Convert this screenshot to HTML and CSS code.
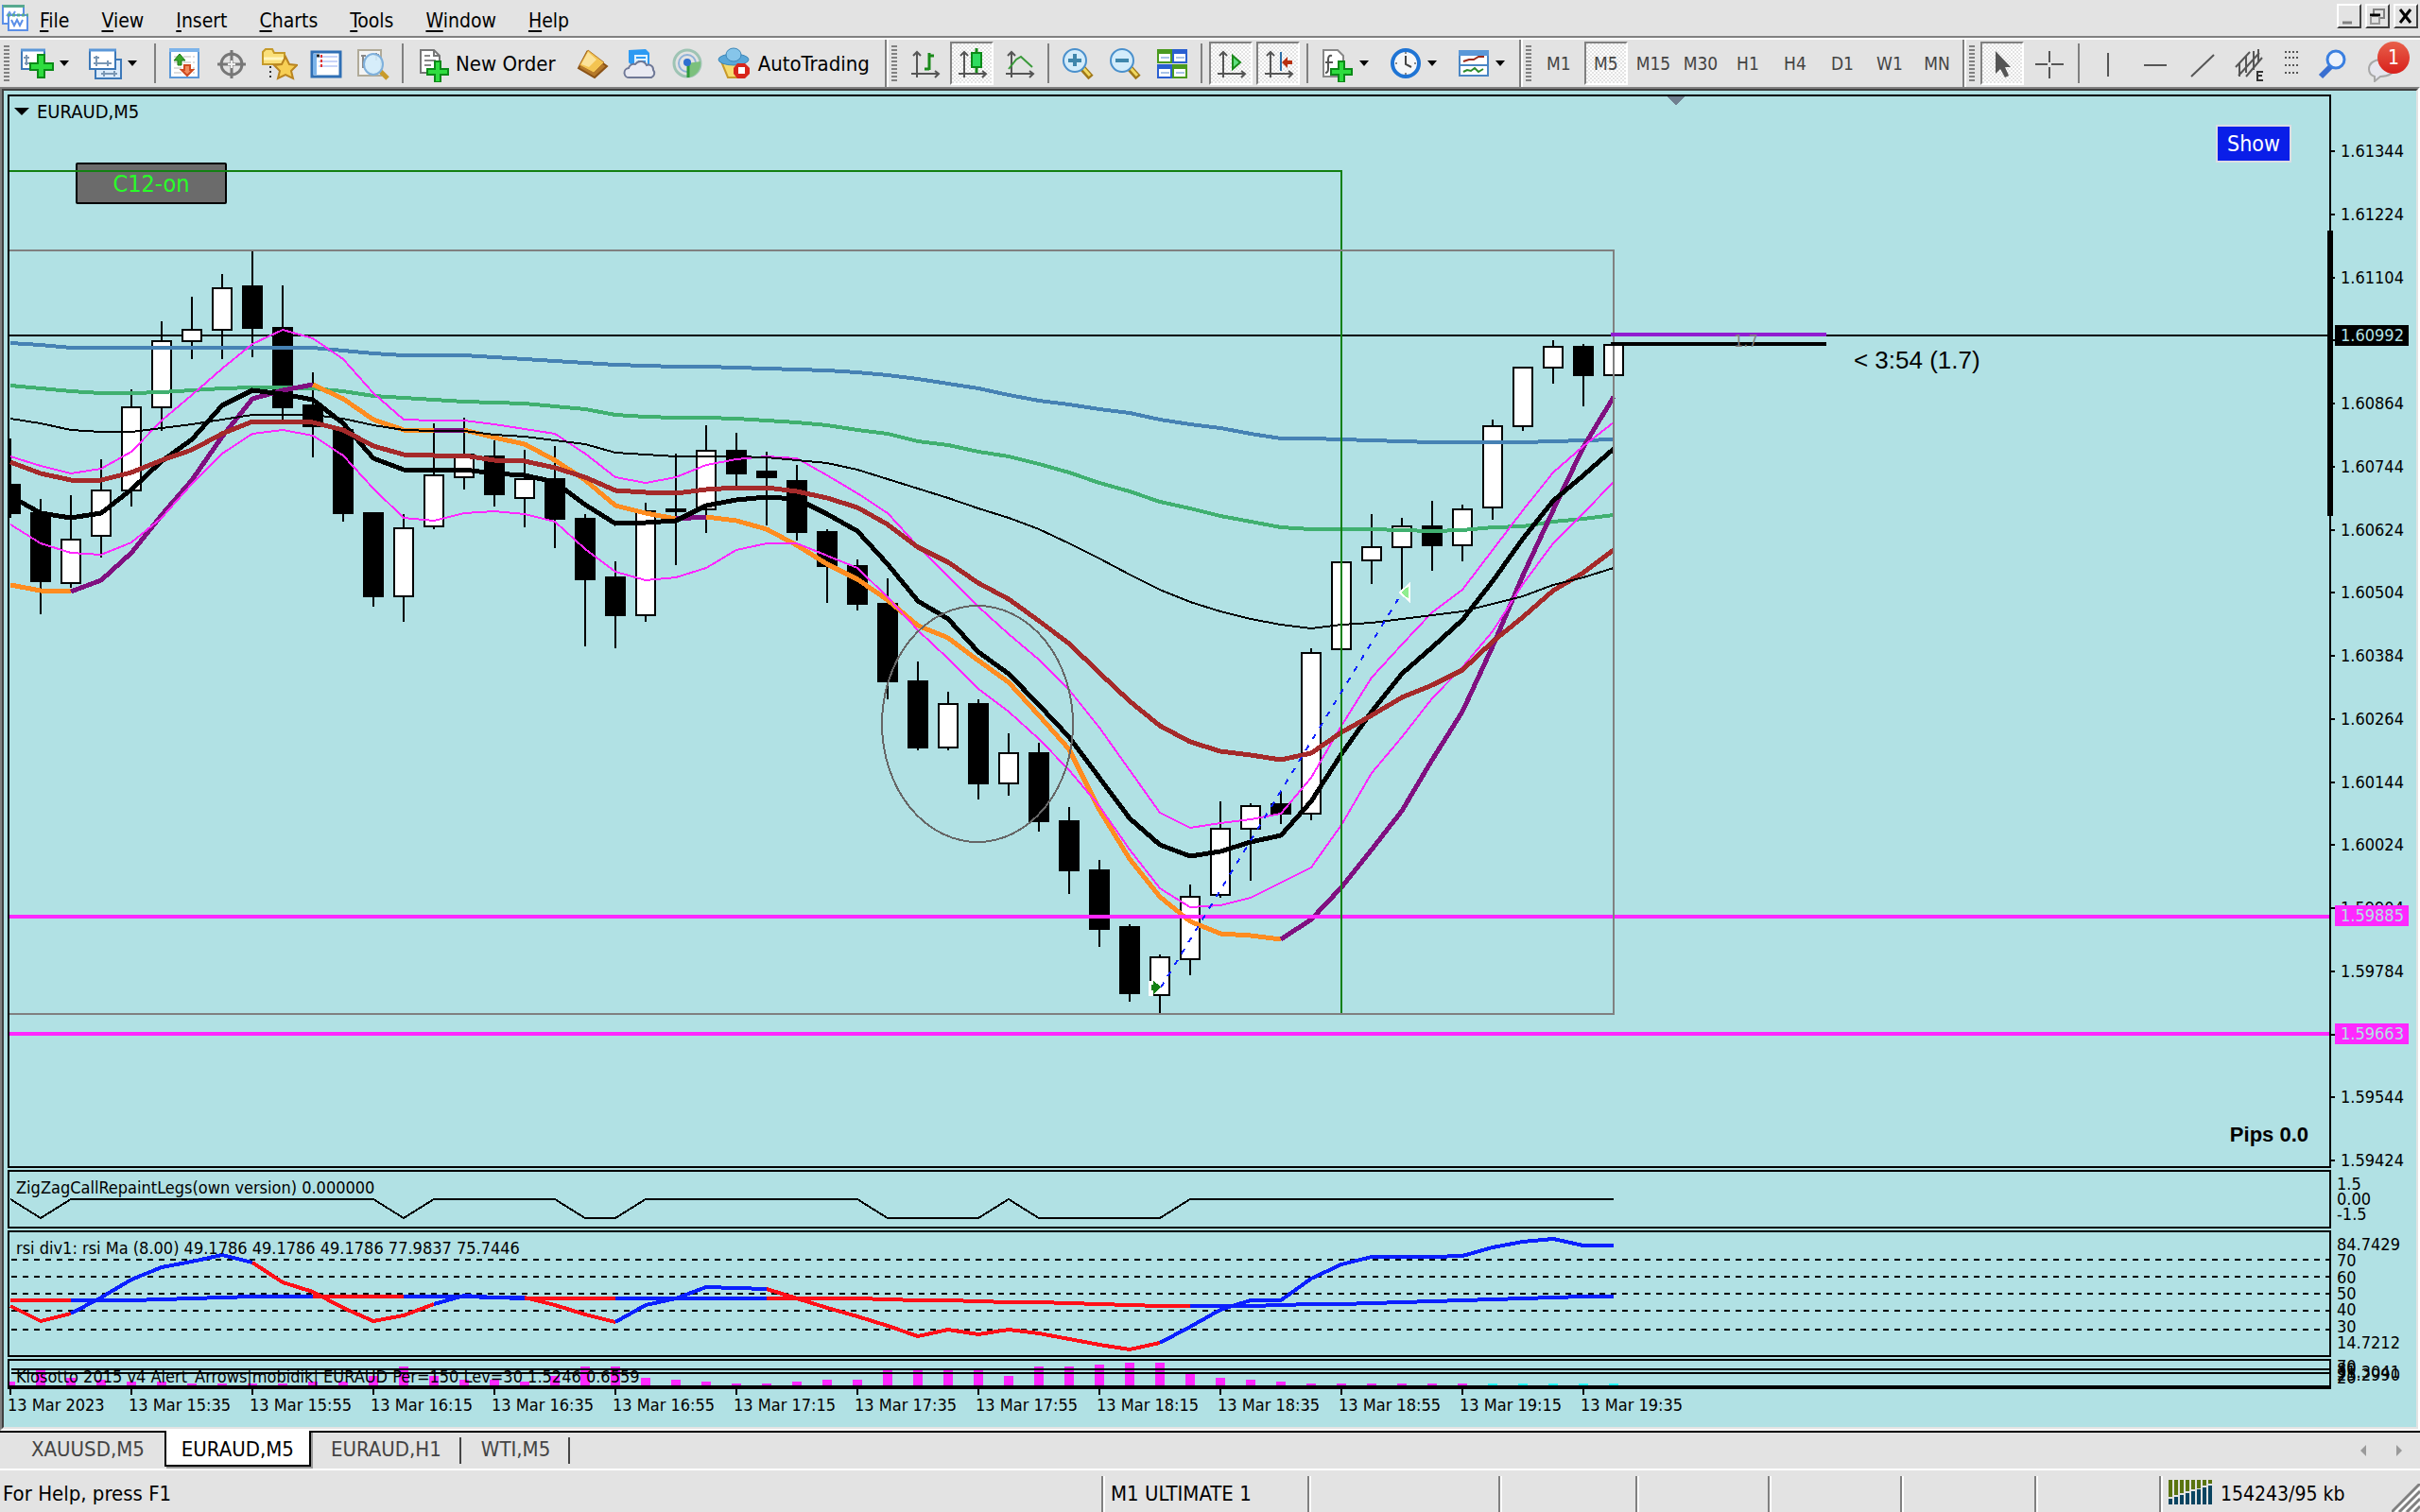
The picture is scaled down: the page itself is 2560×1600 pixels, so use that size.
FILE: index.html
```html
<!DOCTYPE html>
<html lang="en">
<head>
    <meta charset="UTF-8">
    <meta name="viewport" content="width=device-width, initial-scale=1.0">
    <title>EURAUD,M5</title>
    <link rel="stylesheet" href="styles.css">
</head>
<body>

<header class="menubar">
    <svg class="app-icon" viewBox="0 0 28 28">
        <rect x="1" y="1" width="22" height="19" fill="#fff" stroke="#5b8fe8" stroke-width="2"/>
        <rect x="1" y="0" width="23" height="3" fill="#57a98f"/>
        <path d="M5 12l3-4 3 4 3-5" fill="none" stroke="#6d9bf0" stroke-width="2"/>
        <rect x="7" y="11" width="20" height="16" fill="#fff" stroke="#5b8fe8" stroke-width="2"/>
        <path d="M6 11h22" stroke="#57a98f" stroke-width="3" stroke-dasharray="3 2"/>
        <path d="M10 16l3 6 3-6 3 6 3-6" fill="none" stroke="#5b8fe8" stroke-width="2"/>
    </svg>
    <nav class="menu">
        <a href="#"><u>F</u>ile</a>
        <a href="#"><u>V</u>iew</a>
        <a href="#"><u>I</u>nsert</a>
        <a href="#"><u>C</u>harts</a>
        <a href="#"><u>T</u>ools</a>
        <a href="#"><u>W</u>indow</a>
        <a href="#"><u>H</u>elp</a>
    </nav>
    <div class="window-buttons">
        <button aria-label="Minimize"><svg viewBox="0 0 22 22"><path d="M4 18h10" stroke="#808080" stroke-width="3"/></svg></button>
        <button aria-label="Restore"><svg viewBox="0 0 22 22"><path d="M7 9V4h11v9h-4" fill="none" stroke="#808080" stroke-width="2"/><path d="M3 10h11" stroke="#000" stroke-width="3"/><path d="M4 11v8h9v-8" fill="none" stroke="#999" stroke-width="2"/></svg></button>
        <button aria-label="Close"><svg viewBox="0 0 22 22"><path d="M5 4l11 14M16 4L5 18" stroke="#000" stroke-width="3"/></svg></button>
    </div>
</header>

<div class="toolbar">
    <span class="grip"></span>
    <button class="tool drop" aria-label="New chart">
        <svg viewBox="0 0 40 40"><rect x="3" y="6" width="24" height="20" fill="#fff" stroke="#3c78b8" stroke-width="2"/><path d="M2 6h26" stroke="#5b98d8" stroke-width="3"/><path d="M8 11v11M5 14h6M6 20h14" stroke="#7a97b4" stroke-width="2"/><path d="M20 11h7v9h9v7h-9v8h-7v-8h-8v-7h8z" fill="#2fdc3f" stroke="#0b8a18" stroke-width="2"/></svg>
        <i class="arrow"></i>
    </button>
    <button class="tool drop" aria-label="Profiles">
        <svg viewBox="0 0 40 40"><rect x="9" y="16" width="27" height="20" fill="#dcebfa" stroke="#3c78b8" stroke-width="2"/><path d="M15 31h17M18 28v6M29 28v6" stroke="#7a97b4" stroke-width="2"/><rect x="3" y="6" width="27" height="20" fill="#fff" stroke="#3c78b8" stroke-width="2"/><path d="M2 6h29" stroke="#5b98d8" stroke-width="3"/><path d="M7 20h19M10 12v11M22 17v6M7 14h6" stroke="#7a97b4" stroke-width="2"/></svg>
        <i class="arrow"></i>
    </button>
    <span class="sep"></span>
    <button class="tool" aria-label="Market Watch">
        <svg viewBox="0 0 40 40"><rect x="5" y="6" width="30" height="29" fill="#fff" stroke="#5b98d8" stroke-width="2"/><path d="M4 6h32" stroke="#7db4ea" stroke-width="4"/><path d="M9 13h22M9 19h22M9 25h22M9 30h22" stroke="#ddd" stroke-width="2" stroke-dasharray="8 2"/><path d="M15 10l6 7h-4v5h-4v-5H9z" fill="#3aa62a" stroke="#1c7a14"/><path d="M23 33l-6-6h3v-5h6v5h3z" fill="#f08a5c" stroke="#cf4a1e" stroke-width="2"/></svg>
    </button>
    <button class="tool" aria-label="Data Window">
        <svg viewBox="0 0 40 40"><ellipse cx="20" cy="21" rx="11" ry="11" fill="none" stroke="#777" stroke-width="3"/><path d="M20 6v30M5 21h30" stroke="#777" stroke-width="3"/><path d="M20 17v8M16 21h8" stroke="#eee" stroke-width="2"/></svg>
    </button>
    <button class="tool" aria-label="Navigator">
        <svg viewBox="0 0 40 40"><path d="M3 8l3-3h7l2 4h11v12H3z" fill="#fae07a" stroke="#c59a2a" stroke-width="2"/><path d="M4 15h21" stroke="#fff6c0" stroke-width="3"/><path d="M11 23v12" stroke="#333" stroke-width="2" stroke-dasharray="2 3"/><path d="M27 13l4 8 8 1-6 6 2 8-8-4-8 4 2-8-6-6 8-1z" fill="#f7cf55" stroke="#b98420" stroke-width="2"/></svg>
    </button>
    <button class="tool" aria-label="Terminal">
        <svg viewBox="0 0 40 40"><rect x="5" y="8" width="30" height="26" fill="#fff" stroke="#2f6fb4" stroke-width="3"/><path d="M8 10v22" stroke="#7db4ea" stroke-width="4"/><path d="M12 13h20M12 18h20M12 23h20" stroke="#c8d4f8" stroke-width="2"/><path d="M10 12h3" stroke="#222" stroke-width="3"/><path d="M15 11v14" stroke="#e03030" stroke-width="2" stroke-dasharray="3 2"/></svg>
    </button>
    <button class="tool" aria-label="Strategy Tester">
        <svg viewBox="0 0 40 40"><rect x="4" y="6" width="24" height="27" fill="#f4f4f4" stroke="#b0aa98" stroke-width="2"/><path d="M9 11v14M23 9v8M7 12h5M20 11h6" stroke="#888" stroke-width="2"/><path d="M27 28l8 8" stroke="#c89a2a" stroke-width="5"/><ellipse cx="20" cy="21" rx="10" ry="11" fill="#d3ecfb" fill-opacity=".9" stroke="#7fb0dc" stroke-width="2"/></svg>
    </button>
    <span class="sep"></span>
    <button class="tool wide">
        <svg viewBox="0 0 40 40"><path d="M7 6h14l6 6v18H7z" fill="#fff" stroke="#777" stroke-width="2"/><path d="M21 6v6h6" fill="none" stroke="#777" stroke-width="2"/><path d="M11 12h6M11 17h12M11 22h7" stroke="#888" stroke-width="2"/><path d="M22 18h6v8h8v6h-8v8h-6v-8h-8v-6h8z" fill="#2fdc3f" stroke="#0b8a18" stroke-width="2"/></svg>
        New Order
    </button>
    <button class="tool" aria-label="MetaEditor">
        <svg viewBox="0 0 40 40"><path d="M14 8l21 15-13 12L5 25z" fill="#b5792a" stroke="#8a5216" stroke-width="2"/><path d="M15 6l17 13-11 11L6 22z" fill="#f3c451" stroke="#b5792a"/><path d="M15 8l9 8-8 8-8-3z" fill="#fbe29a"/></svg>
    </button>
    <button class="tool" aria-label="VPS">
        <svg viewBox="0 0 40 40"><path d="M8 6l18-1 4 4v14H12l-4-4z" fill="#2c9af3"/><path d="M14 11h14v12H14z" fill="#dff1ff"/><path d="M16 14h10M18 18h8" stroke="#2c9af3" stroke-width="2"/><path d="M9 35a5 5 0 0 1-1-10 6 6 0 0 1 7-4 7 7 0 0 1 12 1 5 5 0 0 1 7 5 5 5 0 0 1-2 8z" fill="#e9eaf2" stroke="#6f7896" stroke-width="2"/></svg>
    </button>
    <button class="tool" aria-label="Signals">
        <svg viewBox="0 0 40 40"><circle cx="20" cy="20" r="14" fill="none" stroke="#9ec4b4" stroke-width="3"/><circle cx="20" cy="20" r="9" fill="none" stroke="#8fb2d8" stroke-width="2"/><path d="M20 20v15a15 15 0 0 0 14-17z" fill="#7cc07c"/><path d="M21 20v15" stroke="#2f9a3a" stroke-width="3"/><circle cx="20" cy="19" r="4" fill="#2f6fd0"/></svg>
    </button>
    <button class="tool wide">
        <svg viewBox="0 0 40 40"><path d="M5 18h24l-5 17H12z" fill="#f6dc6e" stroke="#c89a2a" stroke-width="2"/><ellipse cx="18" cy="16" rx="16" ry="6" fill="#5aa7d8" stroke="#3c86b8"/><ellipse cx="18" cy="11" rx="8" ry="7" fill="#86c5ea" stroke="#3c86b8"/><path d="M22 20h8l5 5v6l-5 5h-8l-4-5v-6z" fill="#d8261c"/><rect x="23" y="24" width="7" height="7" fill="#fff"/></svg>
        AutoTrading
    </button>
    <span class="band"></span>
    <span class="grip"></span>
    <button class="tool" aria-label="Bar chart">
        <svg viewBox="0 0 40 40"><path d="M12 9v26M6 31h28M8 12l4-4 4 4M31 28l4 3-4 4" fill="none" stroke="#555" stroke-width="2"/><path d="M25 9v18M25 12h5M20 26h5" stroke="#1a8a1a" stroke-width="3"/></svg>
    </button>
    <button class="tool pressed" aria-label="Candlesticks">
        <svg viewBox="0 0 40 40"><path d="M12 9v26M6 31h28M8 12l4-4 4 4M31 28l4 3-4 4" fill="none" stroke="#555" stroke-width="2"/><path d="M25 4v26" stroke="#1a8a1a" stroke-width="3"/><rect x="20" y="9" width="10" height="15" fill="#2fdc5f" stroke="#0b8a18" stroke-width="2"/></svg>
    </button>
    <button class="tool" aria-label="Line chart">
        <svg viewBox="0 0 40 40"><path d="M12 9v26M6 31h28M8 12l4-4 4 4M31 28l4 3-4 4" fill="none" stroke="#555" stroke-width="2"/><path d="M9 26l8-10 5-3 12 11" fill="none" stroke="#3a9a3a" stroke-width="2"/></svg>
    </button>
    <span class="sep"></span>
    <button class="tool" aria-label="Zoom in">
        <svg viewBox="0 0 40 40"><path d="M25 25l9 10" stroke="#a07818" stroke-width="7"/><path d="M25 24l8 9" stroke="#f0d860" stroke-width="3"/><ellipse cx="17" cy="17" rx="12" ry="12" fill="#d3ecfb" stroke="#4a90cc" stroke-width="2"/><path d="M17 10v13M10 17h14" stroke="#3f86ac" stroke-width="4"/></svg>
    </button>
    <button class="tool" aria-label="Zoom out">
        <svg viewBox="0 0 40 40"><path d="M25 25l9 10" stroke="#a07818" stroke-width="7"/><path d="M25 24l8 9" stroke="#f0d860" stroke-width="3"/><ellipse cx="17" cy="17" rx="12" ry="12" fill="#d3ecfb" stroke="#4a90cc" stroke-width="2"/><path d="M10 17h14" stroke="#3f86ac" stroke-width="4"/></svg>
    </button>
    <button class="tool" aria-label="Tile windows">
        <svg viewBox="0 0 40 40"><path d="M4 5h16v15H4zM20 21h16v15H20z" fill="#4a9a1e"/><path d="M20 5h16v15H20zM4 21h16v15H4z" fill="#2a5fd0"/><path d="M6 10h12v8H6zM22 10h12v8H22zM6 26h12v8H6zM22 26h12v8H22z" fill="#fff"/><path d="M8 14h9M24 14h9M8 30h9M24 30h9" stroke="#a9c4e8" stroke-width="2"/></svg>
    </button>
    <span class="sep"></span>
    <button class="tool pressed" aria-label="Auto scroll">
        <svg viewBox="0 0 40 40"><path d="M12 9v26M6 31h28M8 12l4-4 4 4M31 28l4 3-4 4" fill="none" stroke="#555" stroke-width="2"/><path d="M22 12v14l8-7z" fill="#5fe07f" stroke="#1a8a1a" stroke-width="2"/></svg>
    </button>
    <button class="tool pressed" aria-label="Chart shift">
        <svg viewBox="0 0 40 40"><path d="M12 9v26M6 31h28M8 12l4-4 4 4M31 28l4 3-4 4" fill="none" stroke="#555" stroke-width="2"/><path d="M23 8v20" stroke="#2a6fa8" stroke-width="2"/><path d="M24 19l6-6v4h5v4h-5v4z" fill="#b83010"/></svg>
    </button>
    <span class="sep"></span>
    <button class="tool drop" aria-label="Indicators">
        <svg viewBox="0 0 40 40"><path d="M5 6h15l6 6v22H5z" fill="#fff" stroke="#888" stroke-width="2"/><path d="M14 12q-4-1-4 4v10q0 4-3 4M7 19h8" fill="none" stroke="#555" stroke-width="2"/><path d="M21 18h6v8h8v6h-8v8h-6v-8h-8v-6h8z" fill="#2fdc3f" stroke="#0b8a18" stroke-width="2"/></svg>
        <i class="arrow"></i>
    </button>
    <button class="tool drop" aria-label="Periods">
        <svg viewBox="0 0 40 40"><ellipse cx="20" cy="20" rx="14" ry="14" fill="#f4f6f8" stroke="#1f74d4" stroke-width="4"/><path d="M20 12v9l6 3" fill="none" stroke="#444" stroke-width="2"/><path d="M20 8v2M20 30v2M9 20h2M29 20h2" stroke="#888" stroke-width="2"/></svg>
        <i class="arrow"></i>
    </button>
    <button class="tool drop" aria-label="Templates">
        <svg viewBox="0 0 40 40"><rect x="5" y="7" width="30" height="26" fill="#fff" stroke="#4a86c4" stroke-width="2"/><rect x="4" y="6" width="32" height="6" fill="#5b98d8"/><path d="M5 22h30" stroke="#4a86c4" stroke-width="2"/><path d="M9 18l6-2h5l5-3h6" fill="none" stroke="#9a2a1a" stroke-width="2"/><path d="M9 29l4-2 4 1 4-3 4 4 5-3" fill="none" stroke="#2a8a2a" stroke-width="2"/></svg>
        <i class="arrow"></i>
    </button>
    <span class="band"></span>
    <span class="grip"></span>
    <button class="tool period">M1</button>
    <button class="tool period pressed">M5</button>
    <button class="tool period">M15</button>
    <button class="tool period">M30</button>
    <button class="tool period">H1</button>
    <button class="tool period">H4</button>
    <button class="tool period">D1</button>
    <button class="tool period">W1</button>
    <button class="tool period">MN</button>
    <span class="band"></span>
    <span class="grip"></span>
    <button class="tool pressed" aria-label="Cursor">
        <svg viewBox="0 0 40 40"><path d="M13 7v24l5-5 5 9 4-2-4-9h6z" fill="#555"/></svg>
    </button>
    <button class="tool" aria-label="Crosshair">
        <svg viewBox="0 0 40 40"><path d="M20 7v12M20 24v12M5 21h13M22 21h13" stroke="#555" stroke-width="2"/></svg>
    </button>
    <span class="sep"></span>
    <button class="tool" aria-label="Vertical line">
        <svg viewBox="0 0 40 40"><path d="M20 9v25" stroke="#555" stroke-width="2"/></svg>
    </button>
    <button class="tool" aria-label="Horizontal line">
        <svg viewBox="0 0 40 40"><path d="M8 22h24" stroke="#555" stroke-width="2"/></svg>
    </button>
    <button class="tool" aria-label="Trendline">
        <svg viewBox="0 0 40 40"><path d="M8 34L32 11" stroke="#555" stroke-width="2"/></svg>
    </button>
    <button class="tool" aria-label="Equidistant channel">
        <svg viewBox="0 0 40 40"><path d="M5 24L20 8M8 33L30 9M16 34L33 14M9 20v14M16 12v18M24 7v20M29 5v14" stroke="#555" stroke-width="2"/><path d="M34 29h-6v9h6M28 33h5" fill="none" stroke="#333" stroke-width="2"/></svg>
    </button>
    <button class="tool narrow" aria-label="Fibonacci">
        <svg viewBox="0 0 24 40"><path d="M5 8h14M5 14h14M5 22h14M5 30h14" stroke="#555" stroke-width="2" stroke-dasharray="2 2"/></svg>
    </button>
    <div class="toolbar-end">
        <button class="tool" aria-label="Search">
            <svg viewBox="0 0 40 40"><path d="M7 34L18 23" stroke="#3a6fd0" stroke-width="6"/><ellipse cx="23" cy="16" rx="9" ry="9" fill="#eef3fb" stroke="#3a7fe0" stroke-width="3"/></svg>
        </button>
        <button class="tool chat" aria-label="Messages">
            <svg viewBox="0 0 40 40"><path d="M16 16c-10 0-14 5-14 10s3 7 6 8v5l6-5c9 0 15-4 15-9z" fill="#e6e6ee" stroke="#a8a8a8" stroke-width="2"/></svg>
            <span class="badge">1</span>
        </button>
    </div>
</div>

<main class="workspace">
    <div class="chart-window">
        <section class="plot">
            <div class="chart-title"><i class="arrow"></i>EURAUD,M5</div>
            <button class="c12">C12-on</button>
            <svg id="price" viewBox="10 102 2454 1132" preserveAspectRatio="none"></svg>
            <button class="show">Show</button>
            <span class="countdown">&lt; 3:54 (1.7)</span>
            <span class="pips">Pips 0.0</span>
            <span class="range-bar"></span>
        </section>
        <div class="axis price-axis">
            <span>1.61344</span><span>1.61224</span><span>1.61104</span><span>1.60984</span>
            <span>1.60864</span><span>1.60744</span><span>1.60624</span><span>1.60504</span>
            <span>1.60384</span><span>1.60264</span><span>1.60144</span><span>1.60024</span>
            <span>1.59904</span><span>1.59784</span><span>1.59664</span><span>1.59544</span>
            <span>1.59424</span>
            <b class="tag bid">1.60992</b>
            <b class="tag level-1">1.59885</b>
            <b class="tag level-2">1.59663</b>
        </div>

        <section class="plot">
            <svg id="zigzag" viewBox="10 1240 2454 58" preserveAspectRatio="none"></svg>
            <span class="pane-label">ZigZagCallRepaintLegs(own version) 0.000000</span>
        </section>
        <div class="axis zigzag-axis"><span>1.5</span><span>0.00</span><span>-1.5</span></div>

        <section class="plot">
            <svg id="rsi" viewBox="10 1304 2454 130" preserveAspectRatio="none"></svg>
            <span class="pane-label">rsi div1: rsi Ma (8.00) 49.1786 49.1786 49.1786 77.9837 75.7446</span>
        </section>
        <div class="axis rsi-axis">
            <span>84.7429</span><span>70</span><span>60</span><span>50</span><span>40</span><span>30</span><span>14.7212</span>
        </div>

        <section class="plot klosotto">
            <svg id="klosotto" viewBox="10 1440 2454 26" preserveAspectRatio="none"></svg>
            <span class="pane-label">Klosotto 2015 v4 Alert_Arrows|mobidik| EURAUD Per=150 Lev=30 1.5246 0.6559</span>
        </section>
        <div class="axis klosotto-axis">
            <span>70</span><span>80</span><span>31.3041</span><span>25.2990</span><span>20</span>
        </div>

        <div class="time-axis">
            <span>13 Mar 2023</span><span>13 Mar 15:35</span><span>13 Mar 15:55</span><span>13 Mar 16:15</span>
            <span>13 Mar 16:35</span><span>13 Mar 16:55</span><span>13 Mar 17:15</span><span>13 Mar 17:35</span>
            <span>13 Mar 17:55</span><span>13 Mar 18:15</span><span>13 Mar 18:35</span><span>13 Mar 18:55</span>
            <span>13 Mar 19:15</span><span>13 Mar 19:35</span>
        </div>
    </div>
</main>

<nav class="tabs">
    <a href="#">XAUUSD,M5</a>
    <a href="#" class="active">EURAUD,M5</a>
    <a href="#" class="divided">EURAUD,H1</a>
    <a href="#" class="divided">WTI,M5</a>
    <div class="tab-scroll">
        <button aria-label="Scroll left"><svg viewBox="0 0 8 12"><path d="M7 0v12L1 6z" fill="#9a9a9a"/></svg></button>
        <button aria-label="Scroll right"><svg viewBox="0 0 8 12"><path d="M1 0v12l6-6z" fill="#9a9a9a"/></svg></button>
    </div>
</nav>

<footer class="statusbar">
    <span>For Help, press F1</span>
    <span>M1 ULTIMATE 1</span>
    <span></span>
    <span></span>
    <span></span>
    <span></span>
    <span></span>
    <span></span>
    <span class="traffic">
        <svg viewBox="0 0 46 26"><path d="M2 0v18M8 0v16M14 0v14M20 0v12M26 0v10M32 0v9M38 0v6M44 0v4" stroke="#5a7410" stroke-width="4"/><path d="M2 26v-6M8 26v-8M14 26v-10M20 26V14M26 26V12M32 26V10M38 26V8M44 26V6" stroke="#0a4460" stroke-width="4"/></svg>
        154243/95 kb
    </span>
    <svg class="resize" viewBox="0 0 30 30"><path d="M0 30L30 0M8 30L30 8M16 30L30 16M24 30L30 24" stroke="#808080" stroke-width="3"/><path d="M4 30L30 4M12 30L30 12M20 30L30 20" stroke="#fff" stroke-width="2"/></svg>
</footer>

<script src="chart.js"></script>
</body>
</html>
```
FILE: styles.css
```css
* {
    box-sizing: border-box;
}

body {
    margin: 0;
    min-height: 100vh;
    display: flex;
    flex-direction: column;
    background-color: #e3e3e3;
    color: #000;
    font-family: "DejaVu Sans Condensed", "DejaVu Sans", sans-serif;
    font-size: 21px;
}

a {
    color: inherit;
    text-decoration: none;
}

button {
    padding: 0;
    border: none;
    background: none;
    color: inherit;
    font: inherit;
}

svg {
    display: block;
}

/* menu */
.menubar {
    display: flex;
    align-items: center;
    height: 40px;
    border-bottom: 2px solid #808080;
}

.app-icon {
    width: 28px;
    height: 28px;
    margin-left: 2px;
}

.menu {
    display: flex;
    gap: 34px;
    flex: 1;
    padding: 6px 0 0 12px;
}

.menu u {
    text-decoration-thickness: 2px;
    text-underline-offset: 3px;
}

.window-buttons {
    display: flex;
    gap: 4px;
    margin: 0 2px 4px 0;
}

.window-buttons button {
    width: 26px;
    height: 26px;
    border: 2px solid;
    border-color: #fff #404040 #404040 #fff;
}

.window-buttons svg {
    width: 22px;
    height: 22px;
}

/* toolbar */
.toolbar {
    display: flex;
    align-items: center;
    height: 52px;
    border-top: 2px solid #fff;
    padding-left: 4px;
}

.grip {
    flex: none;
    width: 6px;
    height: 38px;
    margin-right: 6px;
    background: repeating-linear-gradient(#808080 0 2px, #e3e3e3 2px 4px);
}

.tool {
    position: relative;
    display: flex;
    align-items: center;
    justify-content: center;
    flex: none;
    width: 46px;
    height: 46px;
    margin-right: 4px;
}

.tool svg {
    flex: none;
    width: 40px;
    height: 40px;
}

.tool.drop {
    justify-content: flex-start;
    gap: 3px;
    width: 68px;
    padding-left: 4px;
}

.tool.wide {
    width: auto;
    gap: 4px;
    padding: 0 12px 0 4px;
    font-size: 22px;
}

.tool.narrow {
    width: 34px;
}

.tool.narrow svg {
    width: 24px;
}

.tool.period {
    color: #444;
    font-size: 19px;
}

.tool.pressed {
    border: 2px solid;
    border-color: #808080 #fff #fff #808080;
    background: repeating-conic-gradient(#fff 0 25%, #e3e3e3 0 50%) 0 0 / 4px 4px;
}

.arrow {
    border: 5px solid transparent;
    border-top: 6px solid #000;
    border-bottom: none;
}

.sep {
    flex: none;
    width: 2px;
    height: 42px;
    margin: 0 7px 0 3px;
    background-color: #808080;
}

.band {
    flex: none;
    width: 4px;
    height: 50px;
    margin-right: 3px;
    border-left: 2px solid #808080;
    border-right: 2px solid #fff;
}

.toolbar-end {
    display: flex;
    margin-left: auto;
    padding-right: 4px;
}

.tool.chat {
    width: 58px;
}

.badge {
    position: absolute;
    right: 4px;
    top: 0;
    width: 34px;
    height: 34px;
    border-radius: 50%;
    background: linear-gradient(#e8604a, #d8201c);
    color: #fff;
    line-height: 34px;
}

/* chart window */
.workspace {
    flex: 1;
    display: flex;
    border: 2px solid;
    border-color: #808080 #fff #fff #808080;
}

.chart-window {
    flex: 1;
    display: grid;
    grid-template-columns: 1fr 90px;
    grid-template-rows: 1fr 62px 134px 32px 38px;
    row-gap: 2px;
    padding: 4px 0 0 4px;
    border: 2px solid;
    border-color: #404040 #e3e3e3 #e3e3e3 #404040;
    background-color: #b1e1e4;
    font-size: 18px;
}

.plot {
    position: relative;
    min-height: 0;
    border: 2px solid #000;
}

.plot > svg {
    position: absolute;
    inset: 0;
    width: 100%;
    height: 100%;
    shape-rendering: crispEdges;
    pointer-events: none;
}

.plot.klosotto {
    border-bottom-width: 4px;
}

.chart-title {
    position: absolute;
    left: 5px;
    top: 4px;
    display: flex;
    align-items: center;
    gap: 8px;
    font-size: 20px;
}

.chart-title .arrow {
    border-width: 8px 8px 0;
}

.c12 {
    position: absolute;
    left: 70px;
    top: 70px;
    width: 160px;
    height: 44px;
    border: 2px solid #000;
    border-radius: 2px;
    background-color: #6b6b6b;
    color: #28ff28;
    font-size: 25px;
}

.show {
    position: absolute;
    right: 40px;
    top: 30px;
    width: 80px;
    height: 40px;
    border: 2px solid #dcdce4;
    background-color: #0a1ee8;
    color: #fff;
    font-size: 23px;
}

.countdown {
    position: absolute;
    left: 79.5%;
    top: 264px;
    font-family: "Liberation Sans", Arial, sans-serif;
    font-size: 26px;
}

.pips {
    position: absolute;
    right: 22px;
    bottom: 20px;
    font-family: "Liberation Sans", Arial, sans-serif;
    font-size: 22px;
    font-weight: bold;
}

.range-bar {
    position: absolute;
    right: -4px;
    top: 142px;
    width: 6px;
    height: 302px;
    background-color: #000;
}

.pane-label {
    position: absolute;
    left: 7px;
    top: 7px;
    line-height: 20px;
    white-space: nowrap;
}

/* scales */
.axis {
    position: relative;
    display: flex;
    flex-direction: column;
    justify-content: space-between;
    min-height: 0;
    padding-left: 6px;
    line-height: 16px;
}

.price-axis {
    padding: 52px 0 0;
}

.price-axis span {
    display: flex;
    align-items: center;
    gap: 6px;
}

.price-axis span::before {
    content: "";
    width: 4px;
    height: 2px;
    background-color: #000;
}

.tag {
    position: absolute;
    left: 4px;
    width: 78px;
    padding-left: 6px;
    line-height: 22px;
    font-weight: normal;
    color: #b1e1e4;
}

.bid {
    top: 244px;
    background-color: #000;
}

.level-1 {
    top: 858px;
    background-color: #ff28ff;
}

.level-2 {
    top: 983px;
    background-color: #ff28ff;
}

.zigzag-axis {
    justify-content: center;
}

.rsi-axis {
    padding-top: 7px;
    padding-bottom: 7px;
}

.klosotto-axis {
    justify-content: flex-start;
}

.klosotto-axis span {
    height: 3px;
}

.time-axis {
    display: flex;
}

.time-axis span {
    position: relative;
    width: 128px;
    padding-top: 4px;
    white-space: nowrap;
}

.time-axis span::before {
    content: "";
    position: absolute;
    left: 2px;
    top: -2px;
    width: 2px;
    height: 6px;
    background-color: #000;
}

/* tabs */
.tabs {
    display: flex;
    height: 42px;
    padding-left: 12px;
    border-top: 2px solid #000;
    border-bottom: 2px solid #fff;
    color: #444;
    font-size: 22px;
    line-height: 36px;
}

.tabs a {
    position: relative;
    height: 36px;
    padding: 0 21px;
}

.tabs .active {
    margin-top: -2px;
    height: 38px;
    padding: 0 16px;
    border: 2px solid #000;
    border-top: none;
    background-color: #fff;
    color: #000;
    line-height: 40px;
    box-shadow: 2px 2px 0 #999;
}

.tabs .divided::after {
    content: "";
    position: absolute;
    right: 0;
    top: 5px;
    width: 2px;
    height: 28px;
    background-color: #444;
}

.tab-scroll {
    display: flex;
    align-items: center;
    gap: 30px;
    margin-left: auto;
    padding-right: 18px;
}

.tab-scroll svg {
    width: 8px;
    height: 12px;
}

/* status bar */
.statusbar {
    position: relative;
    display: grid;
    grid-template-columns: 1fr 218px 202px 145px 140px 140px 142px 132px 276px;
    height: 44px;
    padding: 6px 0 2px;
    font-size: 22px;
    line-height: 38px;
}

.statusbar > span {
    padding-left: 8px;
    border-left: 2px solid #808080;
    box-shadow: inset 2px 0 0 #fff;
}

.statusbar > span:first-child {
    padding-left: 3px;
    border-left: none;
    box-shadow: none;
}

.traffic {
    display: flex;
    gap: 9px;
    font-size: 21px;
}

.traffic svg {
    width: 46px;
    height: 26px;
    margin-top: 4px;
}

.resize {
    position: absolute;
    right: 0;
    bottom: 0;
    width: 30px;
    height: 30px;
}
```
FILE: chart.js
```js
var NS = "http://www.w3.org/2000/svg";
var STEP = 32;
var START = 11;

// open/close box top, bottom, high, low, 1 = bull
var candles = [
    [512, 544, 464, 548, 0], [542, 616, 528, 650, 0], [570, 618, 524, 622, 1], [518, 568, 486, 590, 1],
    [430, 520, 412, 536, 1], [360, 432, 340, 456, 1], [348, 362, 314, 380, 1], [304, 350, 290, 380, 1],
    [302, 348, 266, 378, 0], [346, 432, 302, 444, 0], [428, 452, 394, 484, 0], [454, 544, 452, 552, 0],
    [542, 632, 542, 642, 0], [558, 632, 544, 658, 1], [502, 558, 448, 560, 1], [480, 506, 442, 518, 1],
    [482, 524, 466, 536, 0], [506, 528, 476, 558, 1], [506, 550, 472, 580, 0], [548, 614, 544, 684, 0],
    [610, 652, 594, 686, 0], [540, 652, 532, 658, 1], [538, 542, 480, 598, 0], [476, 540, 450, 564, 1],
    [476, 502, 458, 516, 0], [498, 506, 478, 556, 0], [508, 564, 492, 572, 0], [562, 600, 560, 638, 0],
    [598, 640, 592, 646, 0], [638, 722, 612, 740, 0], [720, 792, 700, 794, 0], [744, 792, 732, 794, 1],
    [744, 830, 740, 846, 0], [796, 830, 776, 842, 1], [796, 870, 786, 880, 0], [868, 922, 854, 946, 0],
    [920, 984, 910, 1002, 0], [980, 1052, 978, 1060, 0], [1012, 1054, 1010, 1072, 1], [948, 1016, 936, 1032, 1],
    [876, 948, 848, 950, 1], [852, 878, 850, 932, 1], [850, 862, 838, 872, 0], [690, 862, 686, 868, 1],
    [594, 688, 594, 688, 1], [578, 594, 544, 618, 1], [556, 580, 548, 624, 1], [556, 578, 530, 604, 0],
    [538, 578, 534, 594, 1], [450, 538, 444, 550, 1], [388, 452, 388, 456, 1], [366, 390, 360, 406, 1],
    [366, 398, 364, 430, 0], [364, 398, 364, 398, 1]
];

var blue = [363, 365, 368, 368, 368, 368, 368, 368, 368, 368, 368, 371, 374, 376, 376, 376, 378, 380, 382, 384,
    386, 387, 388, 388, 389, 390, 391, 392, 394, 397, 401, 406, 411, 418, 424, 428, 433, 437, 444, 449,
    453, 459, 464, 464, 465, 466, 467, 468, 468, 468, 468, 467, 466, 465];
var green = [408, 411, 414, 416, 416, 415, 413, 411, 410, 410, 411, 414, 419, 421, 423, 425, 426, 427, 430, 433,
    439, 441, 442, 442, 443, 445, 447, 450, 455, 459, 467, 471, 478, 483, 491, 500, 511, 520, 531, 538,
    546, 552, 558, 560, 560, 560, 561, 562, 561, 558, 557, 552, 549, 545];
var slow = [443, 448, 455, 457, 457, 453, 449, 444, 439, 439, 439, 443, 450, 455, 456, 456, 460, 462, 466, 470,
    479, 481, 483, 483, 483, 484, 487, 490, 497, 507, 517, 527, 538, 548, 560, 575, 591, 608, 624, 637,
    647, 655, 661, 665, 661, 659, 655, 651, 647, 639, 631, 619, 611, 601];
var brown = [489, 501, 508, 508, 500, 487, 476, 459, 446, 446, 447, 455, 472, 481, 482, 482, 487, 488, 495, 505,
    519, 521, 522, 518, 516, 516, 520, 527, 537, 555, 579, 595, 617, 634, 657, 681, 712, 742, 768, 785,
    795, 799, 804, 797, 775, 757, 738, 725, 709, 679, 653, 625, 606, 582];
var fast = [525, 543, 548, 543, 518, 488, 465, 429, 413, 417, 423, 448, 485, 497, 497, 497, 501, 503, 510, 534,
    554, 553, 551, 535, 529, 526, 528, 544, 562, 597, 636, 655, 690, 713, 746, 780, 823, 866, 894, 906,
    901, 891, 884, 848, 798, 753, 713, 685, 656, 615, 570, 530, 503, 475];
var trend = [619, 625, 626, 614, 585, 545, 508, 462, 422, 413, 407, 422, 444, 455, 455, 455, 463, 470, 487, 508,
    535, 543, 549, 547, 551, 560, 577, 597, 613, 635, 662, 675, 699, 722, 757, 793, 857, 909, 949, 975,
    988, 990, 994, 973, 939, 899, 858, 804, 753, 684, 609, 540, 473, 420];
var upper = [483, 493, 501, 496, 478, 445, 418, 390, 364, 349, 358, 380, 416, 444, 445, 445, 449, 454, 459, 480,
    505, 511, 505, 492, 486, 483, 485, 503, 522, 543, 578, 610, 642, 671, 698, 730, 770, 815, 860, 876,
    871, 867, 861, 823, 768, 717, 682, 648, 624, 582, 540, 500, 472, 447];
var lower = [555, 575, 585, 587, 574, 548, 512, 480, 459, 455, 461, 482, 517, 548, 551, 543, 541, 544, 552, 581,
    605, 614, 611, 601, 582, 575, 575, 588, 601, 632, 667, 697, 729, 753, 782, 815, 853, 899, 940, 960,
    958, 950, 934, 918, 873, 818, 780, 739, 706, 668, 618, 575, 543, 510];

var rsi = [1382, 1398, 1390, 1373, 1354, 1341, 1335, 1328, 1336, 1357, 1367, 1384, 1398, 1392, 1380, 1371, 1373, 1373, 1381, 1391,
    1399, 1381, 1374, 1362, 1363, 1364, 1374, 1384, 1393, 1403, 1414, 1407, 1412, 1407, 1411, 1417, 1423, 1428, 1421, 1404,
    1386, 1376, 1376, 1353, 1338, 1330, 1330, 1330, 1329, 1320, 1314, 1311, 1318, 1318];
var rsiMa = [1376, 1376, 1376, 1376, 1376, 1375, 1374, 1373, 1372, 1372, 1372, 1372, 1372, 1372, 1372, 1372, 1373, 1374, 1374, 1374,
    1374, 1374, 1374, 1374, 1374, 1374, 1374, 1374, 1374, 1375, 1376, 1376, 1377, 1378, 1378, 1379, 1380, 1381, 1382, 1382,
    1382, 1382, 1381, 1380, 1380, 1379, 1378, 1377, 1376, 1375, 1374, 1373, 1372, 1372];

// bar heights of the histogram
var bars = [4, 16, 8, 6, 4, 4, 2, 2, 2, 2, 4, 4, 10, 20, 10, 6, 6, 4, 10, 20, 20, 8, 6, 4, 2, 2, 4, 6, 6, 16, 16, 16, 16,
    10, 20, 20, 22, 24, 24, 12, 8, 6, 4, 2, 2, 2, 2, 2, 2, 2, 2, 2, 2, 2];

var ORANGE = "#ff8c20";
var PURPLE = "#801080";
var MAGENTA = "#ff28ff";
var RED = "#ff1018";
var BLUE = "#0a20ff";

function add(svg, tag, attrs) {
    var el = document.createElementNS(NS, tag);
    for (var key in attrs) {
        el.setAttribute(key, attrs[key]);
    }
    svg.appendChild(el);
    return el;
}

function x(i) {
    return START + i * STEP;
}

function series(svg, data, color, width, from, to) {
    var points = [];
    for (var i = from || 0; i <= (to || data.length - 1); i++) {
        points.push(x(i) + "," + data[i]);
    }
    add(svg, "polyline", { points: points.join(" "), fill: "none", stroke: color, "stroke-width": width });
}

// runs: [last index, colour]
function colored(svg, data, width, runs) {
    var from = 0;
    runs.forEach(function (run) {
        series(svg, data, run[1], width, from, run[0]);
        from = run[0];
    });
}

function line(svg, x1, y1, x2, y2, color, width, dash) {
    add(svg, "line", { x1: x1, y1: y1, x2: x2, y2: y2, stroke: color, "stroke-width": width, "stroke-dasharray": dash || "none" });
}

function drawPrice() {
    var svg = document.getElementById("price");

    line(svg, 10, 355, 2464, 355, "#000", 2);

    candles.forEach(function (c, i) {
        add(svg, "rect", { x: x(i) - 1, y: c[2], width: 2, height: c[3] - c[2], fill: "#000" });
        add(svg, "rect", { x: x(i) - 11, y: c[0], width: 22, height: c[1] - c[0], fill: "#000" });
        if (c[4]) {
            add(svg, "rect", { x: x(i) - 9, y: c[0] + 2, width: 18, height: c[1] - c[0] - 4, fill: "#fff" });
        }
    });

    series(svg, blue, "#4682b4", 4);
    series(svg, green, "#40b070", 4);
    colored(svg, trend, 5, [[2, ORANGE], [10, PURPLE], [14, ORANGE], [15, PURPLE], [22, ORANGE], [23, PURPLE], [42, ORANGE], [53, PURPLE]]);
    series(svg, fast, "#000", 5);
    series(svg, upper, MAGENTA, 2);
    series(svg, lower, MAGENTA, 2);
    series(svg, brown, "#a52a2a", 5);
    series(svg, slow, "#000", 2);

    add(svg, "ellipse", { cx: 1034, cy: 766, rx: 101, ry: 125, fill: "none", stroke: "#666", "stroke-width": 2 });

    line(svg, 10, 970, 2464, 970, MAGENTA, 4);
    line(svg, 10, 1094, 2464, 1094, MAGENTA, 4);

    // session boxes
    line(svg, 10, 181, 1420, 181, "#128012", 2);
    line(svg, 1419, 181, 1419, 1072, "#128012", 2);
    line(svg, 10, 265, 1708, 265, "#808080", 2);
    line(svg, 1707, 265, 1707, 1074, "#808080", 2);
    line(svg, 10, 1073, 1708, 1073, "#808080", 2);

    // ask / bid
    line(svg, 1704, 354, 1932, 354, "#901cd0", 4);
    line(svg, 1704, 364, 1932, 364, "#000", 4);
    add(svg, "text", { x: 1834, y: 367, fill: "#808080", "font-size": 18 }).textContent = "1.7";

    // closed trade
    line(svg, 1228, 1045, 1479, 634, BLUE, 2, "6 8");
    add(svg, "path", { d: "M1215 1038h5v16h-5z", fill: "#fff" });
    add(svg, "path", { d: "M1218 1042h2v-4l8 6-8 8v-4h-2z", fill: "#128012" });
    add(svg, "path", { d: "M1491 618v18l-10-9z", fill: "#90ee90", stroke: "#fff", "stroke-width": 2 });

    add(svg, "path", { d: "M1764 102h18l-9 10z", fill: "#708090" });
}

function drawZigzag() {
    var svg = document.getElementById("zigzag");
    var low = [1, 13, 19, 20, 29, 30, 31, 32, 34, 35, 36, 37, 38];
    var data = candles.map(function (c, i) {
        return low.indexOf(i) >= 0 ? 1289 : 1269;
    });
    series(svg, data, "#000", 2);
}

function drawRsi() {
    var svg = document.getElementById("rsi");
    [1333, 1351, 1369, 1387, 1407].forEach(function (y) {
        line(svg, 12, y, 2464, y, "#000", 2, "6 6");
    });
    colored(svg, rsi, 4, [[2, RED], [8, BLUE], [14, RED], [17, BLUE], [20, RED], [25, BLUE], [38, RED], [53, BLUE]]);
    colored(svg, rsiMa, 4, [[2, RED], [10, BLUE], [13, RED], [17, BLUE], [20, RED], [25, BLUE], [39, RED], [53, BLUE]]);
}

function drawKlosotto() {
    var svg = document.getElementById("klosotto");
    bars.forEach(function (h, i) {
        add(svg, "rect", { x: x(i) - 5, y: 1466 - h, width: 10, height: h, fill: i > 48 ? "#20ffff" : MAGENTA });
    });
    line(svg, 12, 1449, 2464, 1449, "#000", 2);
    line(svg, 12, 1453, 2464, 1453, "#000", 2);
}

drawPrice();
drawZigzag();
drawRsi();
drawKlosotto();
```
